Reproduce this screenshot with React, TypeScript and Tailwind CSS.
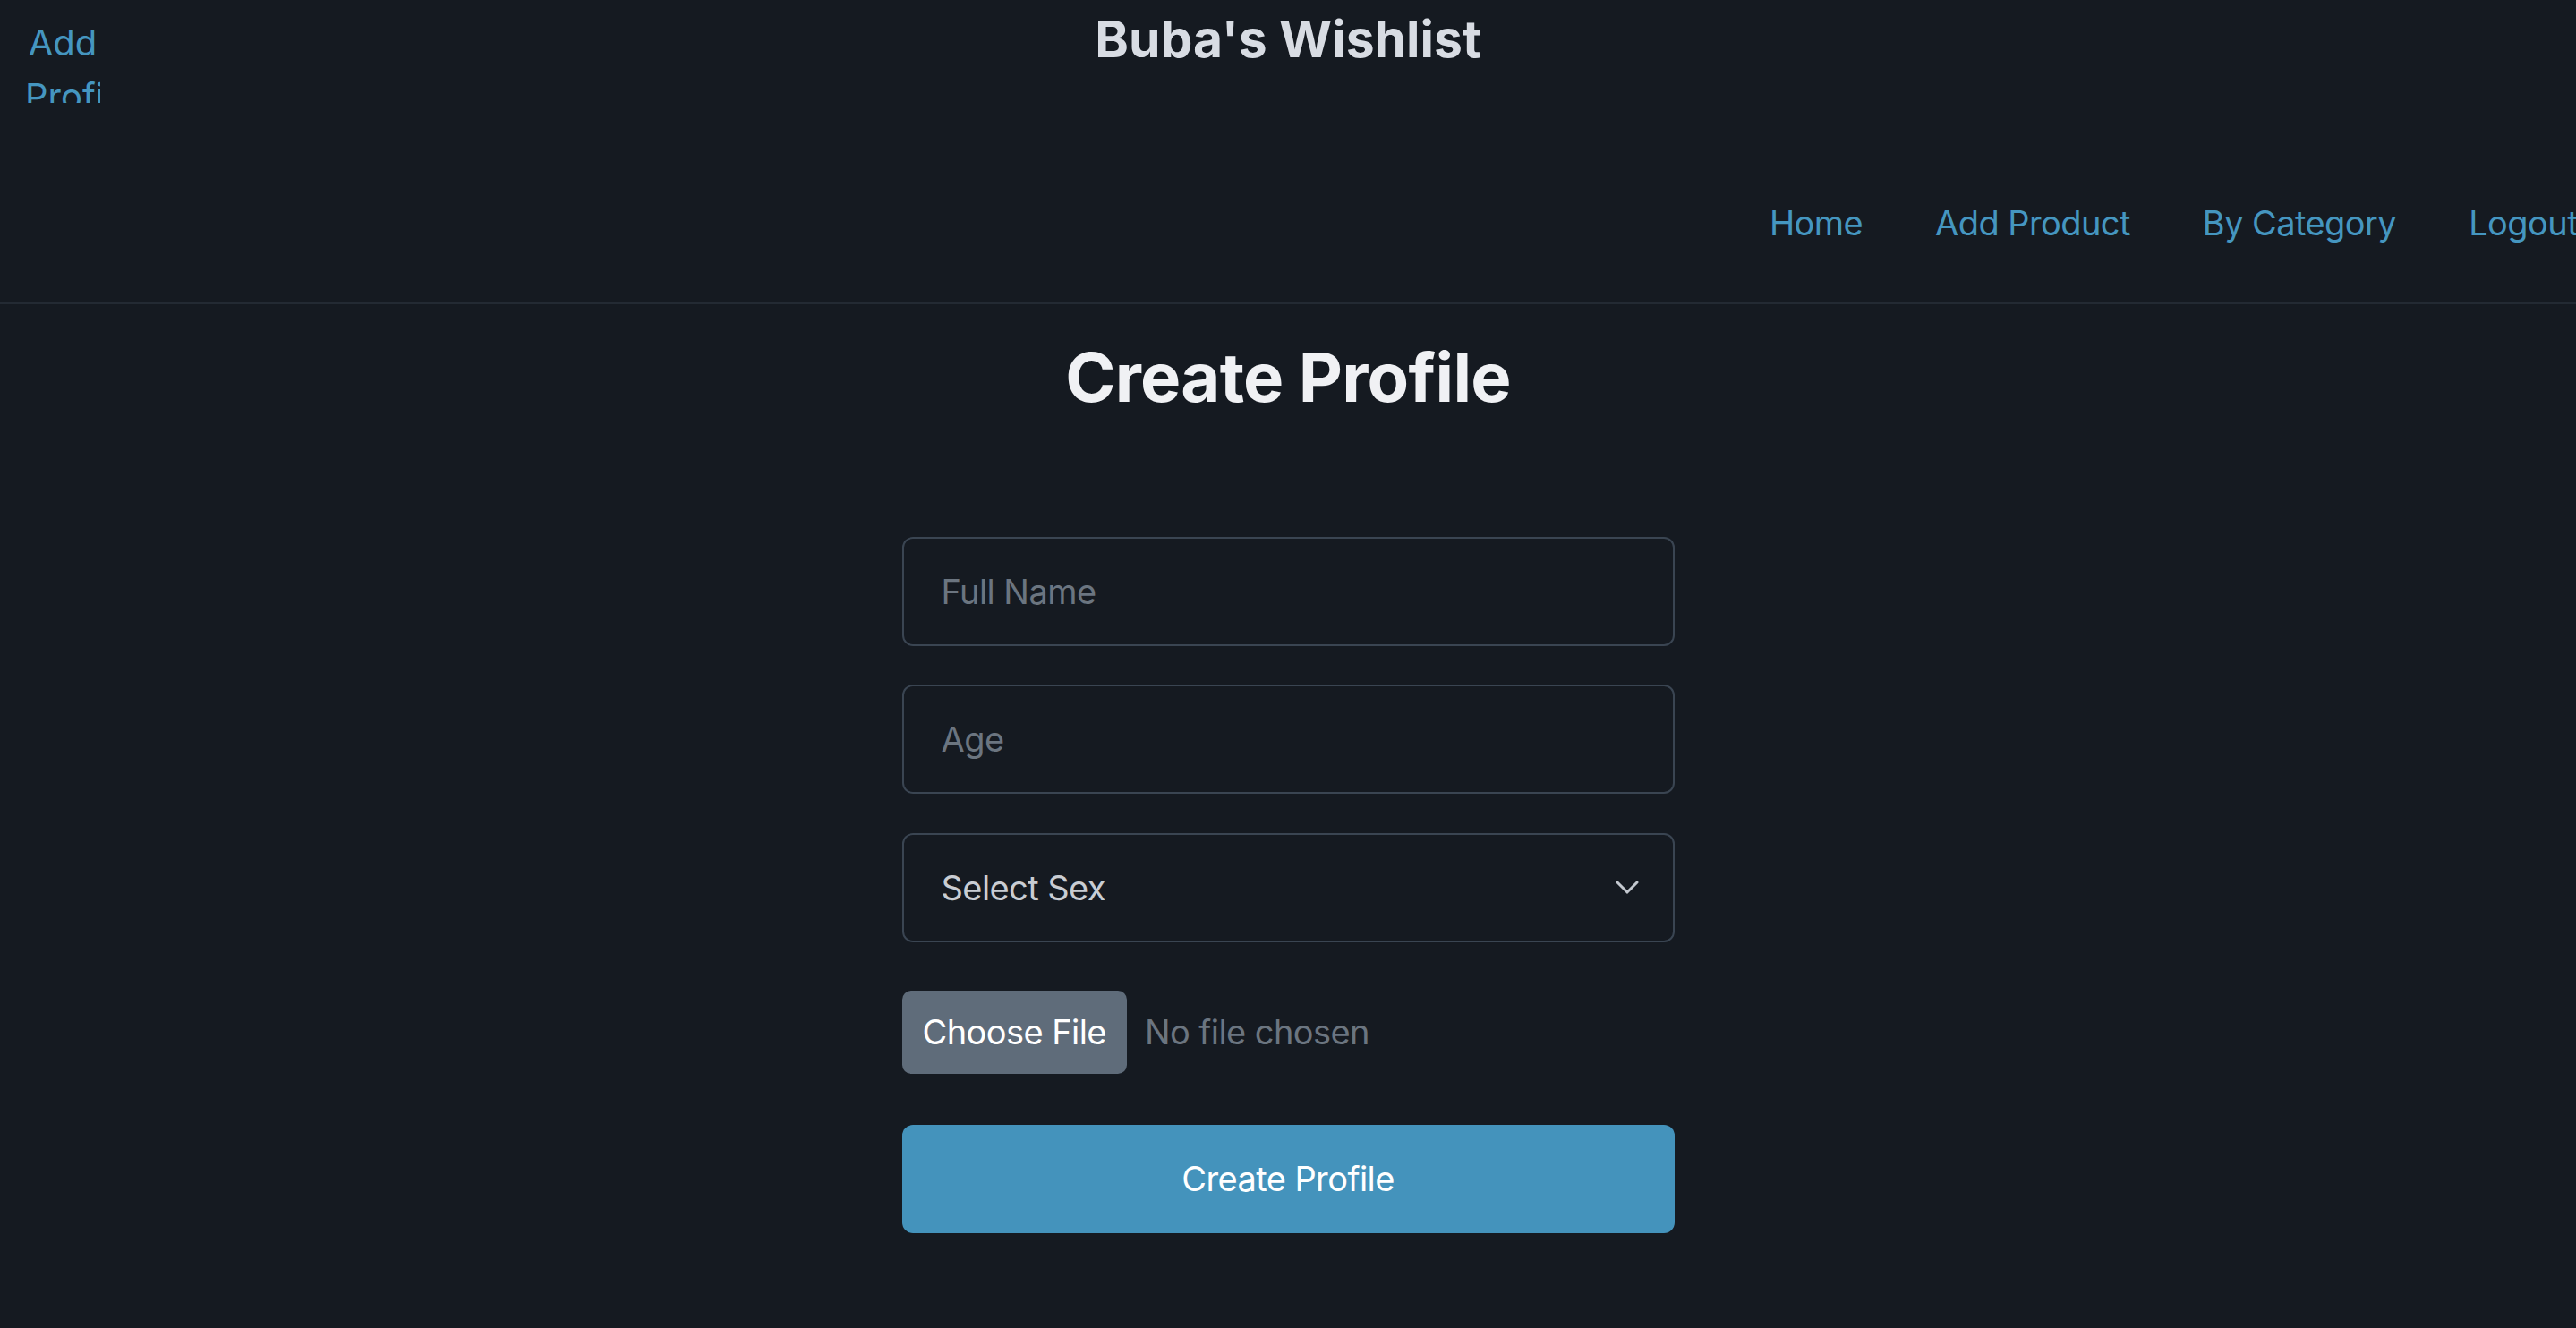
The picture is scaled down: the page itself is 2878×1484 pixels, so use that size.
export default function App() {
  return (
    <div
      className="min-h-screen w-full overflow-hidden bg-[#151a21]"
      style={{ fontFamily: "Inter, 'Noto Sans', sans-serif" }}
    >
      <header className="border-b-2 border-[#232a33]">
        <div className="grid grid-cols-[1fr_auto_1fr] items-start">
          <div className="pl-[28px] pt-[18px]">
            <div className="h-[97px] w-[84px] overflow-hidden text-center text-[40px] leading-[60px] text-[#4596c0]">
              Add Profile
            </div>
          </div>
          <h1 className="pt-[9px] text-[57px] font-bold leading-[70px] text-[#d8dce3]">
            Buba's Wishlist
          </h1>
          <div />
        </div>
        <nav className="-mr-[2px] flex justify-end gap-[81px] pt-[104px] pb-[59px] text-[38px] leading-[60px] tracking-[-0.015em] text-[#4596c0]">
          <a className="whitespace-nowrap">Home</a>
          <a className="whitespace-nowrap">Add Product</a>
          <a className="whitespace-nowrap">By Category</a>
          <a className="whitespace-nowrap">Logout</a>
        </nav>
      </header>

      <main className="flex flex-col items-center">
        <h2 className="pt-[33px] text-[76px] font-bold leading-[96px] tracking-[-0.01em] text-[#f0f1f4]">
          Create Profile
        </h2>

        <form className="mt-[131px] flex w-[863px] flex-col text-[38px] tracking-[-0.015em]">
          <input
            placeholder="Full Name"
            className="h-[122px] rounded-[12px] border-2 border-[#3a4552] bg-transparent px-[42px] text-[#d8dce3] placeholder:text-[#6b7580] outline-none"
          />
          <input
            placeholder="Age"
            className="mt-[43px] h-[122px] rounded-[12px] border-2 border-[#3a4552] bg-transparent px-[42px] text-[#d8dce3] placeholder:text-[#6b7580] outline-none"
          />
          <div className="relative mt-[44px] flex h-[122px] items-center rounded-[12px] border-2 border-[#3a4552] px-[42px] text-[#c9cdd3]">
            Select Sex
            <svg
              className="absolute right-[38px] top-1/2 -translate-y-1/2"
              width="26"
              height="16"
              viewBox="0 0 26 16"
              fill="none"
              stroke="#c3c8cf"
              strokeWidth="3"
              strokeLinecap="round"
            >
              <path d="M2 2l11 11L24 2" />
            </svg>
          </div>

          <div className="mt-[54px] flex items-center gap-[20px]">
            <div className="flex h-[93px] items-center rounded-[10px] bg-[#5f6c7a] px-[23px] text-white">
              Choose File
            </div>
            <span className="text-[#6b7580]">No file chosen</span>
          </div>

          <button
            type="button"
            className="mt-[57px] h-[121px] rounded-[12px] bg-[#4493bc] tracking-[-0.015em] text-white"
          >
            Create Profile
          </button>
        </form>
      </main>
    </div>
  );
}
